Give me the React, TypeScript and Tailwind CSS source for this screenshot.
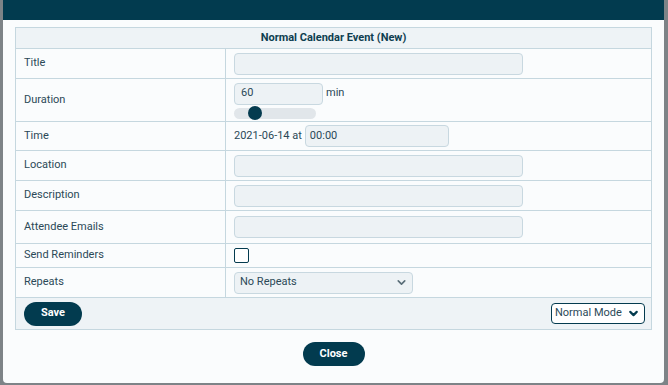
import { ChevronDown } from "lucide-react";

const rows = [
  { label: "Title", kind: "text", h: "h-[30px]" },
  { label: "Duration", kind: "duration", h: "h-[43px]" },
  { label: "Time", kind: "time", h: "h-[29px]" },
  { label: "Location", kind: "text", h: "h-[30px]" },
  { label: "Description", kind: "text", h: "h-[30px]" },
  { label: "Attendee Emails", kind: "text", h: "h-[33px]" },
  { label: "Send Reminders", kind: "check", h: "h-[24px]" },
  { label: "Repeats", kind: "select", h: "h-[30px]" },
];

function Field({ kind }: { kind: string }) {
  if (kind === "duration") {
    return (
      <div className="flex flex-col gap-[3px] pt-[1px]">
        <div className="flex items-center gap-[3px]">
          <div className="w-[89px] h-[22px] rounded-[4px] border border-[#c8d8e0] bg-[#edf2f5] px-[6px] flex items-center">
            60
          </div>
          <span>min</span>
        </div>
        <div className="relative w-[82px] h-[11px] rounded-full bg-[#e1e6ea]">
          <div className="absolute left-[14px] top-[-2px] w-[14px] h-[14px] rounded-full bg-[#043b4f]" />
        </div>
      </div>
    );
  }
  if (kind === "time") {
    return (
      <div className="flex items-center gap-[3px]">
        <span>2021-06-14 at</span>
        <div className="w-[144px] h-[22px] rounded-[4px] border border-[#c8d8e0] bg-[#edf2f5] px-[4px] flex items-center">
          00:00
        </div>
      </div>
    );
  }
  if (kind === "check") {
    return <div className="w-[15px] h-[15px] rounded-[2px] border border-[#043b4f] bg-white" />;
  }
  if (kind === "select") {
    return (
      <div className="w-[179px] h-[22px] rounded-[4px] border border-[#c8d8e0] bg-[#edf2f5] pl-[5px] pr-[4px] flex items-center justify-between">
        <span>No Repeats</span>
        <ChevronDown className="w-[13px] h-[13px] text-[#5a6e78]" strokeWidth={3} />
      </div>
    );
  }
  return <div className="w-[289px] h-[22px] rounded-[4px] border border-[#c8d8e0] bg-[#edf2f5]" />;
}

export default function App() {
  return (
    <div
      className="w-[668px] h-[385px] bg-[#7d8387] flex text-[11px] text-[#2b4957]"
      style={{ fontFamily: "Roboto, 'Liberation Sans', sans-serif" }}
    >
      <div className="ml-[3px] w-[661px] h-[383px] bg-[#fafcfd] rounded-b-[4px] flex flex-col overflow-hidden">
        <div className="h-[20px] bg-[#023b4f]" />
        <div className="mx-[12px] mt-[7px] border border-[#c5d7df]">
          <div className="h-[21px] bg-[#eef3f6] border-b border-[#c5d7df] flex items-center justify-center font-bold text-[#0e3e50]">
            Normal Calendar Event (New)
          </div>
          {rows.map((r) => (
            <div key={r.label} className={`flex border-b border-[#c5d7df] ${r.h}`}>
              <div className="w-[210px] border-r border-[#c5d7df] pl-[8px] flex items-center">
                {r.label}
              </div>
              <div className="flex-1 pl-[8px] flex items-center">
                <Field kind={r.kind} />
              </div>
            </div>
          ))}
          <div className="h-[31px] bg-[#eef3f6] flex items-center justify-between pl-[8px] pr-[6px]">
            <button className="w-[58px] h-[24px] rounded-full bg-[#023b4f] text-white font-bold">
              Save
            </button>
            <div className="w-[94px] h-[21px] rounded-[4px] border border-[#043b4f] bg-white flex items-center justify-between pl-[3px] pr-[4px] whitespace-nowrap">
              <span>Normal Mode</span>
              <ChevronDown className="w-[13px] h-[13px] text-[#043b4f]" strokeWidth={4} />
            </div>
          </div>
        </div>
        <div className="flex justify-center mt-[12px]">
          <button className="w-[62px] h-[24px] rounded-full bg-[#023b4f] text-white font-bold">
            Close
          </button>
        </div>
      </div>
    </div>
  );
}
